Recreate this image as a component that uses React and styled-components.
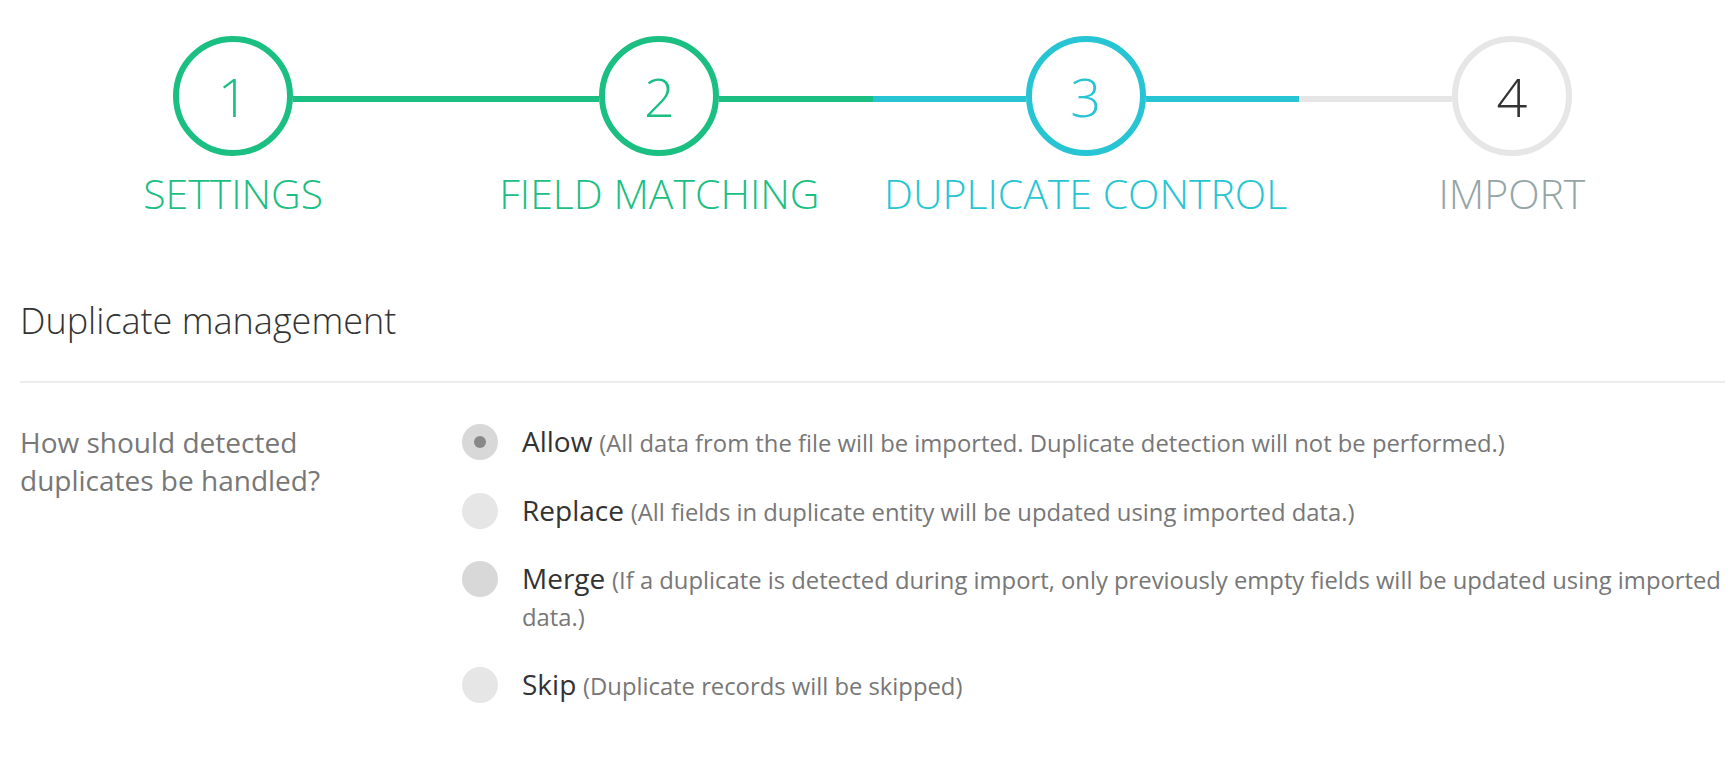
import styled, { createGlobalStyle } from "styled-components";

const GREEN = "#1bbf82";
const TEAL = "#27c5d3";
const GREY = "#e6e6e6";

const steps = [
  { num: 1, label: "SETTINGS", state: "done" },
  { num: 2, label: "FIELD MATCHING", state: "done" },
  { num: 3, label: "DUPLICATE CONTROL", state: "active" },
  { num: 4, label: "IMPORT", state: "todo" },
];

const options = [
  { name: "Allow", note: "(All data from the file will be imported. Duplicate detection will not be performed.)", checked: true },
  { name: "Replace", note: "(All fields in duplicate entity will be updated using imported data.)" },
  { name: "Merge", note: "(If a duplicate is detected during import, only previously empty fields will be updated using imported data.)", hover: true },
  { name: "Skip", note: "(Duplicate records will be skipped)" },
];

const stateColor = (s) => (s === "done" ? GREEN : s === "active" ? TEAL : GREY);

function App() {
  return (
    <Page>
      <GlobalStyle />
      <Stepper>
        {steps.map((step, i) => (
          <Step key={step.num}>
            <Track>
              <Line color={i === 0 ? "transparent" : stateColor(step.state)} />
              <Circle state={step.state}>{step.num}</Circle>
              <Line color={i === steps.length - 1 ? "transparent" : stateColor(step.state)} />
            </Track>
            <StepLabel state={step.state}>{step.label}</StepLabel>
          </Step>
        ))}
      </Stepper>

      <Heading>Duplicate management</Heading>
      <Divider />

      <FormRow>
        <Question>How should detected duplicates be handled?</Question>
        <Options>
          {options.map((o) => (
            <Option key={o.name}>
              <Radio checked={o.checked} hover={o.hover} />
              <OptionText>
                <OptionName>{o.name}</OptionName> <OptionNote>{o.note}</OptionNote>
              </OptionText>
            </Option>
          ))}
        </Options>
      </FormRow>
    </Page>
  );
}

const GlobalStyle = createGlobalStyle`
  html, body {
    margin: 0;
    padding: 0;
    background: #fff;
  }
  body {
    font-family: "Open Sans", "Noto Sans", sans-serif;
  }
`;

const Page = styled.div`
  padding: 36px 11px 0 20px;
`;

const Stepper = styled.div`
  display: grid;
  grid-template-columns: repeat(4, 1fr);
`;

const Step = styled.div`
  display: flex;
  flex-direction: column;
  align-items: center;
`;

const Track = styled.div`
  display: flex;
  align-items: center;
  width: 100%;
`;

const Line = styled.div`
  flex: 1;
  height: 6px;
  margin-top: 6px;
  background: ${(p) => p.color};
`;

const Circle = styled.div`
  width: 108px;
  height: 108px;
  border-radius: 50%;
  border: 6px solid ${(p) => stateColor(p.state)};
  display: flex;
  align-items: center;
  justify-content: center;
  font-size: 54px;
  font-weight: 300;
  line-height: 1;
  box-sizing: content-box;
  color: ${(p) => (p.state === "todo" ? "#333" : stateColor(p.state))};
`;

const StepLabel = styled.div`
  margin-top: 17px;
  font-size: 41px;
  font-weight: 300;
  line-height: 1;
  color: ${(p) => (p.state === "todo" ? "#95a5a6" : stateColor(p.state))};
`;

const Heading = styled.h2`
  margin: 89px 0 0;
  font-size: 36px;
  font-weight: 300;
  line-height: 1;
  color: #333;
`;

const Divider = styled.div`
  height: 2px;
  background: #ececec;
  margin-top: 42px;
`;

const FormRow = styled.div`
  display: grid;
  grid-template-columns: 442px 1fr;
  margin-top: 41px;
`;

const Question = styled.div`
  font-size: 28px;
  line-height: 37.5px;
  color: #777;
  padding-right: 110px;
`;

const Options = styled.div`
  display: flex;
  flex-direction: column;
  gap: 31.5px;
`;

const Option = styled.div`
  display: flex;
  align-items: flex-start;
  gap: 24px;
`;

const Radio = styled.span`
  flex: none;
  width: 36px;
  height: 36px;
  border-radius: 50%;
  background: ${(p) => (p.checked || p.hover ? "#d8d8d8" : "#e6e6e6")};
  display: flex;
  align-items: center;
  justify-content: center;

  &::after {
    content: "";
    display: ${(p) => (p.checked ? "block" : "none")};
    width: 12px;
    height: 12px;
    border-radius: 50%;
    background: #888;
  }
`;

const OptionText = styled.div`
  font-size: 26px;
  line-height: 37px;
`;

const OptionName = styled.span`
  font-size: 28px;
  line-height: 1;
  color: #333;
`;

const OptionNote = styled.span`
  font-size: 23.8px;
  line-height: 1;
  color: #777;
`;

export default App;
